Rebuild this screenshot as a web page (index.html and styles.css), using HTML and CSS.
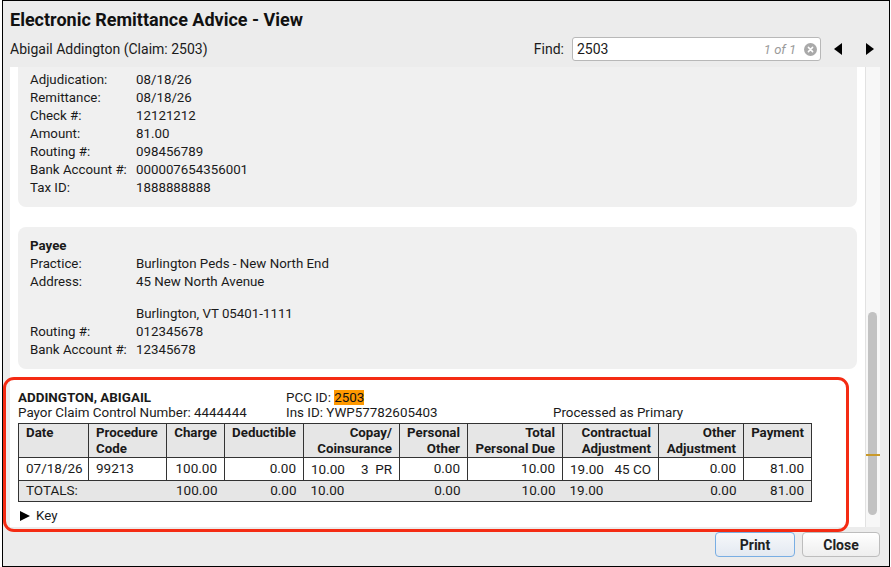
FILE: index.html
```html
<!DOCTYPE html>
<html lang="en">
<head>
    <meta charset="UTF-8">
    <title>Electronic Remittance Advice - View</title>
    <link rel="stylesheet" href="styles.css">
</head>
<body>
    <div class="window">
        <header class="dlg-header">
            <h1 class="dlg-title">Electronic Remittance Advice - View</h1>
            <div class="subbar">
                <span class="patient">Abigail Addington (Claim: 2503)</span>
                <div class="find">
                    <label for="find-input">Find:</label>
                    <div class="find-box">
                        <span class="find-value" id="find-input">2503</span>
                        <span class="find-count">1 of 1</span>
                        <svg class="find-clear" width="13" height="13" viewBox="0 0 13 13">
                            <circle cx="6.5" cy="6.5" r="6.5" fill="#a9a9a9"/>
                            <path d="M4.4 4.4 L8.6 8.6 M8.6 4.4 L4.4 8.6" stroke="#fff" stroke-width="1.5" stroke-linecap="round"/>
                        </svg>
                    </div>
                    <button class="nav-btn" title="Previous">
                        <svg width="8" height="12" viewBox="0 0 8 12"><path d="M8 0 L0 6 L8 12 Z" fill="#000"/></svg>
                    </button>
                    <button class="nav-btn" title="Next">
                        <svg width="8" height="12" viewBox="0 0 8 12"><path d="M0 0 L8 6 L0 12 Z" fill="#000"/></svg>
                    </button>
                </div>
            </div>
        </header>

        <div class="viewer">
            <div class="viewer-content">
                <!-- payer box is scrolled, only its lower part shows -->
                <section class="info-box info-box--cut">
                    <div class="field"><span class="field-label">Adjudication:</span><span>08/18/26</span></div>
                    <div class="field"><span class="field-label">Remittance:</span><span>08/18/26</span></div>
                    <div class="field"><span class="field-label">Check #:</span><span>12121212</span></div>
                    <div class="field"><span class="field-label">Amount:</span><span>81.00</span></div>
                    <div class="field"><span class="field-label">Routing #:</span><span>098456789</span></div>
                    <div class="field"><span class="field-label">Bank Account #:</span><span>000007654356001</span></div>
                    <div class="field"><span class="field-label">Tax ID:</span><span>1888888888</span></div>
                </section>

                <section class="info-box">
                    <div class="box-title">Payee</div>
                    <div class="field"><span class="field-label">Practice:</span><span>Burlington Peds - New North End</span></div>
                    <div class="field">
                        <span class="field-label">Address:</span>
                        <div class="address">
                            <span>45 New North Avenue</span>
                            <span class="address-blank"></span>
                            <span>Burlington, VT 05401-1111</span>
                        </div>
                    </div>
                    <div class="field"><span class="field-label">Routing #:</span><span>012345678</span></div>
                    <div class="field"><span class="field-label">Bank Account #:</span><span>12345678</span></div>
                </section>

                <section class="claim">
                    <div class="claim-head">
                        <span class="claim-name">ADDINGTON, ABIGAIL</span>
                        <span>PCC ID: <mark class="hit">2503</mark></span>
                        <span></span>
                        <span>Payor Claim Control Number: 4444444</span>
                        <span>Ins ID: YWP57782605403</span>
                        <span>Processed as Primary</span>
                    </div>
                    <table class="claim-table">
                        <colgroup>
                            <col style="width:70px"><col style="width:78px"><col style="width:58px"><col style="width:79px">
                            <col style="width:96px"><col style="width:68px"><col style="width:95px"><col style="width:96px">
                            <col style="width:85px"><col style="width:68px">
                        </colgroup>
                        <thead>
                            <tr>
                                <th class="left">Date</th>
                                <th class="left">Procedure Code</th>
                                <th>Charge</th>
                                <th>Deductible</th>
                                <th>Copay/ Coinsurance</th>
                                <th>Personal Other</th>
                                <th>Total Personal Due</th>
                                <th>Contractual Adjustment</th>
                                <th>Other Adjustment</th>
                                <th>Payment</th>
                            </tr>
                        </thead>
                        <tbody>
                            <tr>
                                <td>07/18/26</td>
                                <td>99213</td>
                                <td class="num">100.00</td>
                                <td class="num">0.00</td>
                                <td><div class="split"><span>10.00</span><span>3&nbsp;&nbsp;PR</span></div></td>
                                <td class="num">0.00</td>
                                <td class="num">10.00</td>
                                <td><div class="split"><span>19.00</span><span>45&nbsp;CO</span></div></td>
                                <td class="num">0.00</td>
                                <td class="num">81.00</td>
                            </tr>
                            <tr class="totals">
                                <td colspan="2">TOTALS:</td>
                                <td class="num">100.00</td>
                                <td class="num">0.00</td>
                                <td>10.00</td>
                                <td class="num">0.00</td>
                                <td class="num">10.00</td>
                                <td>19.00</td>
                                <td class="num">0.00</td>
                                <td class="num">81.00</td>
                            </tr>
                        </tbody>
                    </table>
                    <div class="key-toggle">
                        <svg width="10" height="10" viewBox="0 0 10 10"><path d="M0 0 L10 5 L0 10 Z" fill="#000"/></svg>
                        <span>Key</span>
                    </div>
                </section>
            </div>
            <div class="scrollbar">
                <div class="scroll-thumb"></div>
                <div class="scroll-mark"></div>
            </div>
        </div>

        <footer class="dlg-footer">
            <button class="btn btn-default">Print</button>
            <button class="btn">Close</button>
        </footer>

        <div class="callout"></div>
    </div>
</body>
</html>
```

FILE: styles.css
```css
* {
    box-sizing: border-box;
}

body {
    margin: 0;
    padding: 0;
    font-family: Roboto, "Liberation Sans", Arial, sans-serif;
    color: #1a1a1a;
    background-color: #fff;
}

.window {
    position: relative;
    margin-left: 2px;
    width: 888px;
    height: 567px;
    border: 1px solid #000;
    background-color: #ececec;
    padding: 8px 9px 0 7px;
}

/* header */
.dlg-title {
    margin: 0;
    font-size: 18px;
    line-height: 22px;
    font-weight: 700;
    color: #111;
}

.subbar {
    display: flex;
    align-items: center;
    justify-content: space-between;
    margin-top: 6px;
    height: 24px;
    padding-right: 6px;
}

.patient {
    font-size: 14px;
}

.find {
    display: flex;
    align-items: center;
    font-size: 14px;
}

.find label {
    margin-right: 8px;
}

.find-box {
    display: flex;
    align-items: center;
    width: 249px;
    height: 24px;
    padding: 0 3px 0 4px;
    background-color: #fff;
    border: 1px solid #b8b8b8;
    border-radius: 3px;
}

.find-value {
    flex: 1;
    font-size: 14px;
}

.find-count {
    font-size: 13px;
    font-style: italic;
    color: #9a9a9a;
    margin-right: 8px;
}

.nav-btn {
    display: flex;
    align-items: center;
    background: none;
    border: none;
    padding: 0;
    margin-left: 13px;
    cursor: pointer;
}

.nav-btn + .nav-btn {
    margin-left: 24px;
}

/* scrolling area */
.viewer {
    display: flex;
    margin-top: 6px;
    width: 870px;
    height: 460px;
    background-color: #fff;
}

.viewer-content {
    flex: 1;
    overflow: hidden;
    padding: 0 8px;
    font-size: 13.3px;
}

.info-box {
    background-color: #f0f0f0;
    border-radius: 8px;
    padding: 10px 12px 10px 12px;
    margin-bottom: 20px;
}

.info-box--cut {
    border-radius: 0 0 8px 8px;
    padding-top: 4px;
}

.box-title {
    font-weight: 700;
    line-height: 18px;
}

.field {
    display: flex;
    line-height: 18px;
}

.field-label {
    width: 106px;
    flex-shrink: 0;
}

.address {
    display: flex;
    flex-direction: column;
}

.address-blank {
    height: 14px;
}

.claim-head {
    display: grid;
    grid-template-columns: 268px 267px 1fr;
    line-height: 15px;
    font-size: 13.4px;
    padding-top: 1px;
}

.claim-name {
    font-weight: 700;
}

.hit {
    background-color: #f90;
    color: #111;
    padding: 0;
}

.claim-table {
    margin-top: 3px;
    width: 793px;
    table-layout: fixed;
    border-collapse: collapse;
    border: 1px solid #333;
    font-size: 13.5px;
    line-height: 15px;
}

.claim-table th,
.claim-table td {
    border: 1px solid #333;
    padding: 3px 7px;
    vertical-align: top;
    white-space: nowrap;
}

.claim-table th {
    background-color: #e6e6e6;
    font-weight: 700;
    font-size: 13.3px;
    line-height: 16px;
    text-align: right;
    white-space: normal;
    padding: 1px 7px 0;
}

.claim-table th.left {
    text-align: left;
}

.claim-table td.num {
    text-align: right;
}

.split {
    display: flex;
    justify-content: space-between;
    padding-top: 1px;
}

.claim-table tr.totals td {
    background-color: #e6e6e6;
    border-left: none;
    border-right: none;
    padding: 2px 7px 3px;
}

.key-toggle {
    display: flex;
    align-items: center;
    gap: 6px;
    margin-top: 6px;
    margin-left: 2px;
    line-height: 16px;
    font-size: 13.3px;
}

/* fake scrollbar */
.scrollbar {
    position: relative;
    width: 15px;
    border-left: 1px solid #e2e2e2;
    background-color: #f7f7f7;
}

.scroll-thumb {
    position: absolute;
    left: 2px;
    top: 245px;
    width: 9px;
    height: 203px;
    border-radius: 5px;
    background-color: #c2c2c2;
}

.scroll-mark {
    position: absolute;
    left: 0;
    right: 0;
    top: 387px;
    height: 2px;
    background-color: #c9992a;
}

/* footer */
.dlg-footer {
    display: flex;
    justify-content: flex-end;
    gap: 7px;
    margin-top: 5px;
    width: 870px;
}

.btn {
    width: 78px;
    height: 25px;
    font-family: inherit;
    font-size: 14px;
    font-weight: 700;
    color: #222;
    background: linear-gradient(#fff, #eeeeee);
    border: 1px solid #bdbdbd;
    border-radius: 4px;
    cursor: pointer;
}

.btn-default {
    width: 80px;
    border-color: #79aee3;
    background: linear-gradient(#f6f8fb, #e3e9f1);
}

/* red highlight drawn over the claim */
.callout {
    position: absolute;
    left: 0;
    top: 376px;
    width: 846px;
    height: 155px;
    border: 3px solid #f42b13;
    border-radius: 11px;
    pointer-events: none;
}
```
